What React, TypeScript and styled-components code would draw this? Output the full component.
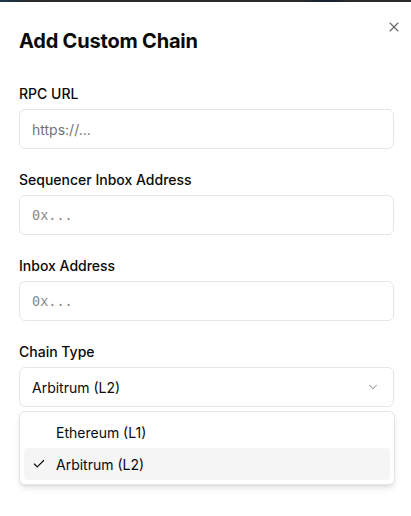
import React from "react";
import styled, { createGlobalStyle } from "styled-components";
import { X, Check, ChevronDown } from "lucide-react";

const Global = createGlobalStyle`
  html, body { margin: 0; padding: 0; background: #ffffff; }
  body { font-family: Inter, "Noto Sans", "Liberation Sans", sans-serif; color: #0a0a0a; -webkit-font-smoothing: antialiased; }
  * { box-sizing: border-box; }
`;

const Page = styled.div`
  width: 411px;
  height: 516px;
  display: flex;
  flex-direction: column;
  overflow: hidden;
`;

const Backdrop = styled.div`
  height: 2px;
  flex: none;
  background: linear-gradient(90deg, #1d3a52 0px, #262a2e 24px, #2c2c2c 60px, #2c2c2c 300px, #1a2334 318px, #1a2334 336px, #2c2c2c 350px);
`;

const Dialog = styled.div`
  position: relative;
  flex: 1;
  background: #ffffff;
  padding: 25px 17px 0 19px;
  display: flex;
  flex-direction: column;
`;

const Title = styled.h2`
  margin: 0;
  font-size: 20px;
  line-height: 28px;
  font-weight: 700;
  letter-spacing: -0.2px;
  color: #0a0a0a;
`;

const CloseButton = styled.button`
  position: absolute;
  top: 17px;
  right: 9px;
  width: 16px;
  height: 16px;
  padding: 0;
  border: none;
  background: transparent;
  color: #333333;
  opacity: 0.75;
  display: flex;
  align-items: center;
  justify-content: center;
`;

const Form = styled.div`
  margin-top: 32px;
  display: flex;
  flex-direction: column;
  gap: 24px;
`;

const Field = styled.div`
  display: flex;
  flex-direction: column;
  gap: 8px;
`;

const Label = styled.label`
  font-size: 14px;
  line-height: 14px;
  font-weight: 500;
  color: #0a0a0a;
`;

const Input = styled.input<{ $mono?: boolean }>`
  height: 40px;
  width: 100%;
  border: 1px solid #e5e5e5;
  border-radius: 6px;
  padding: 0 12px;
  background: #ffffff;
  font-family: ${(p) =>
    p.$mono
      ? `"DejaVu Sans Mono", "Liberation Mono", monospace`
      : `Inter, "Noto Sans", sans-serif`};
  font-size: ${(p) => (p.$mono ? "13.5px" : "14px")};
  color: #0a0a0a;
  outline: none;
  &::placeholder { color: ${(p) => (p.$mono ? "#8a8a8a" : "#737373")}; }
`;

const SelectWrap = styled.div`
  position: relative;
`;

const SelectTrigger = styled.button`
  height: 40px;
  width: 100%;
  border: 1px solid #e5e5e5;
  border-radius: 6px;
  padding: 0 12px;
  background: #ffffff;
  display: flex;
  align-items: center;
  justify-content: space-between;
  font-family: Inter, "Noto Sans", sans-serif;
  font-size: 14px;
  color: #0a0a0a;
  text-align: left;
`;

const Chevron = styled(ChevronDown)`
  opacity: 0.4;
  color: #0a0a0a;
  margin-right: 1px;
`;

const Popover = styled.div`
  position: absolute;
  top: calc(100% + 4px);
  left: 0;
  right: -1px;
  background: #ffffff;
  border: 1px solid #e5e5e5;
  border-radius: 6px;
  padding: 4px;
  box-shadow: 0 4px 6px -1px rgba(0, 0, 0, 0.1), 0 2px 4px -2px rgba(0, 0, 0, 0.1);
  display: flex;
  flex-direction: column;
`;

const Option = styled.div<{ $active?: boolean }>`
  height: 32px;
  border-radius: 4px;
  display: flex;
  align-items: center;
  padding-left: 32px;
  position: relative;
  font-size: 14px;
  color: #0a0a0a;
  background: ${(p) => (p.$active ? "#f5f5f5" : "transparent")};
`;

const CheckMark = styled.span`
  position: absolute;
  left: 8px;
  top: 0;
  bottom: 0;
  width: 14px;
  display: flex;
  align-items: center;
  justify-content: center;
`;

export default function App() {
  return (
    <>
      <Global />
      <Page>
        <Backdrop />
        <Dialog>
          <Title>Add Custom Chain</Title>
          <CloseButton aria-label="Close">
            <X size={16} strokeWidth={1.6} />
          </CloseButton>
          <Form>
            <Field>
              <Label>RPC URL</Label>
              <Input placeholder="https://..." />
            </Field>
            <Field>
              <Label>Sequencer Inbox Address</Label>
              <Input $mono placeholder="0x..." />
            </Field>
            <Field>
              <Label>Inbox Address</Label>
              <Input $mono placeholder="0x..." />
            </Field>
            <Field>
              <Label>Chain Type</Label>
              <SelectWrap>
                <SelectTrigger>
                  <span>Arbitrum (L2)</span>
                  <Chevron size={14} strokeWidth={1.8} />
                </SelectTrigger>
                <Popover>
                  <Option>Ethereum (L1)</Option>
                  <Option $active>
                    <CheckMark>
                      <Check size={16} strokeWidth={2} />
                    </CheckMark>
                    Arbitrum (L2)
                  </Option>
                </Popover>
              </SelectWrap>
            </Field>
          </Form>
        </Dialog>
      </Page>
    </>
  );
}
